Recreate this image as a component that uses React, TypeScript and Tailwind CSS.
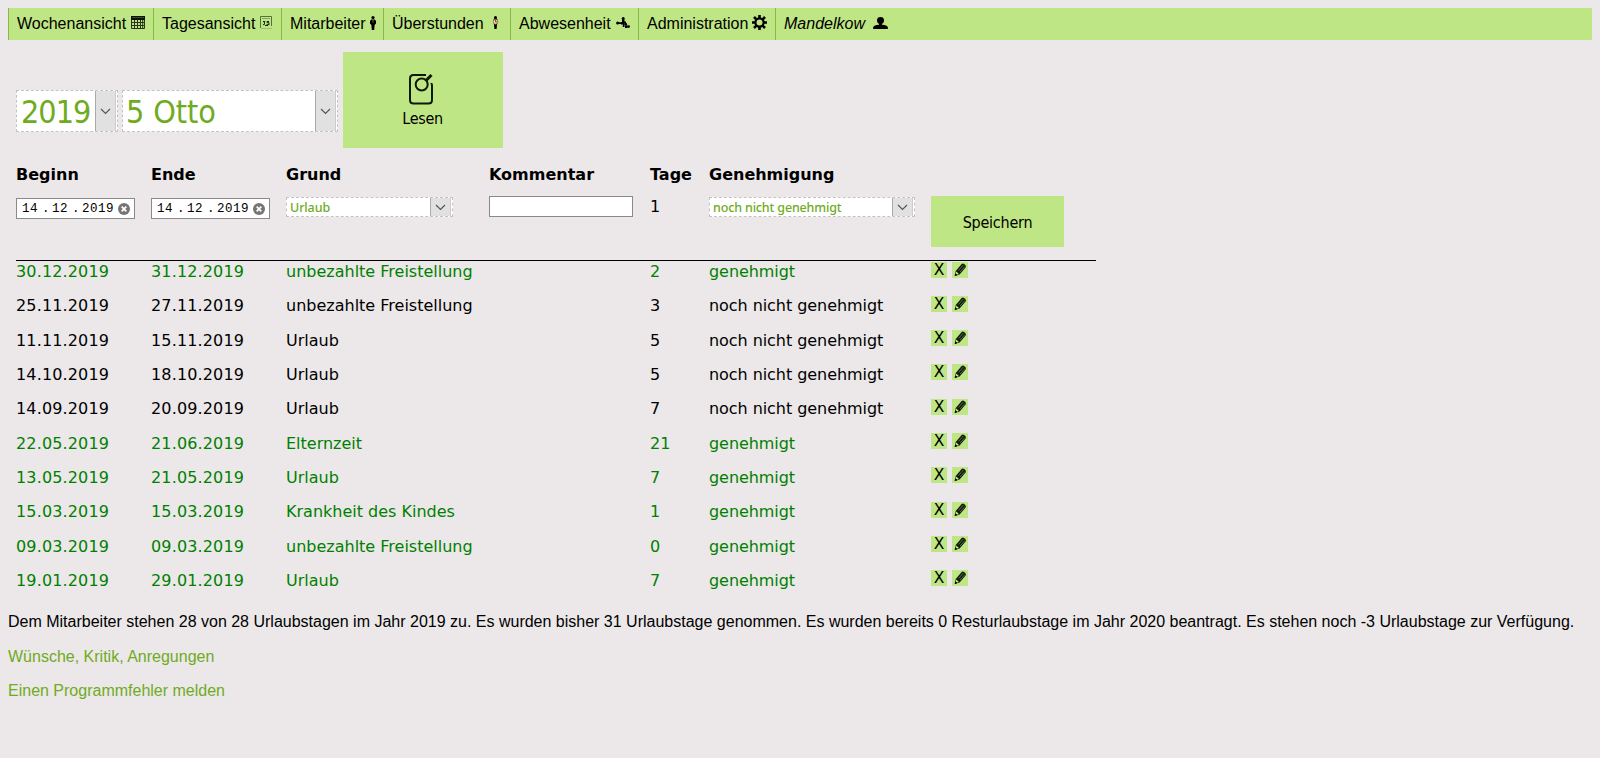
import React from "react";

const ChevronDown = () => (
  <svg width="11" height="7" viewBox="0 0 11 7" fill="none" stroke="#555" strokeWidth="1.2">
    <path d="M1 1l4.500 4.500L10 1" />
  </svg>
);

const CalendarIcon = () => (
  <svg width="14" height="13" viewBox="0 0 14 13">
    <path d="M0 0h14v4H0z" fill="#0c1206" />
    <path d="M1 1.500h12" stroke="#5d7440" strokeWidth=".6" />
    <path d="M.5 4v8.500h13V4M3.500 4v9M6.500 4v9M9.500 4v9M11.700 4v9M0 6.500h14M0 9.500h14" fill="none" stroke="#27361a" />
  </svg>
);

const DayIcon = () => (
  <svg width="13" height="13" viewBox="0 0 13 13" fill="none">
    <path d="M.5 12V.5h11V10" stroke="#55703a" />
    <path d="M2 2.500h8" stroke="#86a85c" />
    <path d="M1 12.500h11" stroke="#9cc46c" />
    <path d="M3 5.500h2l-1 1.500 1 1-2 .8M9 5.500H7v1.200h2v2H6.500M5 9.500h3" stroke="#1a260e" />
  </svg>
);

const ManIcon = () => (
  <svg width="6" height="14" viewBox="0 0 6 14">
    <circle cx="3" cy="1.600" r="1.600" />
    <path d="M1.200 3.500h3.600L6 5v2.500L4.600 9 4.200 14H1.800L1.400 9 0 7.500V5z" />
    <path d="M3 4v2.500" stroke="#8dad63" strokeWidth=".7" />
  </svg>
);

const OvertimeIcon = () => (
  <svg width="7" height="13" viewBox="0 0 7 13">
    <circle cx="3.500" cy="1.500" r="1.500" />
    <path d="M2 2.500h3l1 3-1 3-.4 4.500H2.400L2 8.500l-1-3z" />
    <circle cx="3.500" cy="5.800" r="2.400" fill="#e8dcb4" stroke="#75844f" strokeWidth=".6" />
    <path d="M3.500 4v2H5.400" fill="none" stroke="#e02a10" />
  </svg>
);

const AbsenceIcon = () => (
  <svg width="14" height="11" viewBox="0 0 14 11">
    <circle cx="7.200" cy="1.500" r="1.500" />
    <path d="M6 2.500h2.500V10H6.800V7.400H5V5h1z" />
    <circle cx="1.600" cy="6" r="1.500" />
    <path d="M1.500 5.300h5v1.600h-5zM8 4.600h2v1.800H8z" />
    <circle cx="9.800" cy="7.400" r="1.400" />
    <path d="M9 8.400h2.500V11H9z" />
    <circle cx="12.600" cy="9.600" r="1.400" />
  </svg>
);

const GearIcon = () => (
  <svg width="15" height="15" viewBox="0 0 15 15" fill="none" stroke="#000">
    <circle cx="7.500" cy="7.500" r="4.100" strokeWidth="2.200" />
    <path d="M7.500 0v3M7.500 12v3M0 7.500h3M12 7.500h3M2 2l2.400 2.400M10.600 10.600L13 13M13 2l-2.400 2.400M4.400 10.600L2 13" strokeWidth="2.600" />
  </svg>
);

const UserIcon = () => (
  <svg width="15" height="12" viewBox="0 0 15 12">
    <ellipse cx="7.500" cy="3.400" rx="3.500" ry="3.400" />
    <path d="M6 6h3v1.800c4 .3 6 1.400 6 3.200 0 .6-.5 1-1 1H1c-.5 0-1-.4-1-1 0-1.800 2-2.900 6-3.200z" />
  </svg>
);

const PencilIcon = () => (
  <svg width="16" height="16" viewBox="0 0 16 16" className="block">
    <path d="M3.700 9L9.500 2.200Q10.700 1 12.300 2.200l1 1Q14.500 4.400 13.600 5.600L7.600 12.600 3 14z" fill="#10180a" />
    <path d="M4.300 9.600l2.600 2.400-1.800.8-1.500-1.300z" fill="#bfe484" />
    <path d="M6.400 8.500l5-5.500M8 10l5-5.500" stroke="#7d9a56" strokeWidth=".7" />
    <path d="M2.600 14l.6-2.700 2.100 1.800z" fill="#000" />
  </svg>
);

const ReadIcon = () => (
  <svg width="24" height="32" viewBox="0 0 24 32" fill="none" stroke="#10180a" strokeWidth="2">
    <path d="M17 2H4.500Q1 2 1 5.500V27Q1 30.500 4.500 30.500h15Q23 30.500 23 27V12l-.8-2" />
    <circle cx="12.700" cy="11.500" r="6" />
    <path d="M17 7.500l5.500-5.500" strokeWidth="3" />
  </svg>
);

const ClearIcon = () => (
  <svg width="12" height="12" viewBox="0 0 12 12">
    <circle cx="6" cy="6" r="6" fill="#757575" />
    <path d="M3.700 3.700l4.600 4.600M8.300 3.700L3.700 8.300" stroke="#fff" strokeWidth="1.800" />
  </svg>
);

const nav = [
  { label: "Wochenansicht", width: "w-[145px]", icon: <CalendarIcon />, gap: "gap-[5px]" },
  { label: "Tagesansicht", width: "w-[128px]", icon: <DayIcon />, gap: "gap-[5px]" },
  { label: "Mitarbeiter", width: "w-[102px]", icon: <ManIcon />, gap: "gap-[4px]" },
  { label: "Überstunden", width: "w-[127px]", icon: <OvertimeIcon />, gap: "gap-[8px]" },
  { label: "Abwesenheit", width: "w-[128px]", icon: <AbsenceIcon />, gap: "gap-[5px]" },
  { label: "Administration", width: "w-[137px]", icon: <GearIcon />, gap: "gap-[4px]" },
  { label: "Mandelkow", width: "w-[140px]", icon: <UserIcon />, gap: "gap-[8px]", italic: true },
];

const rows = [
  ["30.12.2019", "31.12.2019", "unbezahlte Freistellung", "2", true],
  ["25.11.2019", "27.11.2019", "unbezahlte Freistellung", "3", false],
  ["11.11.2019", "15.11.2019", "Urlaub", "5", false],
  ["14.10.2019", "18.10.2019", "Urlaub", "5", false],
  ["14.09.2019", "20.09.2019", "Urlaub", "7", false],
  ["22.05.2019", "21.06.2019", "Elternzeit", "21", true],
  ["13.05.2019", "21.05.2019", "Urlaub", "7", true],
  ["15.03.2019", "15.03.2019", "Krankheit des Kindes", "1", true],
  ["09.03.2019", "09.03.2019", "unbezahlte Freistellung", "0", true],
  ["19.01.2019", "29.01.2019", "Urlaub", "7", true],
] as const;

const GRID = "grid grid-cols-[135px_135px_203px_161px_59px_222px_165px]";

function Select({ text, box, label }: { text: string; box: string; label: string }) {
  return (
    <div className={`flex border border-dashed border-[#c4c2c2] bg-white pr-px text-[#6fab1f] ${box}`}>
      <span className={`flex-1 whitespace-nowrap ${label}`}>{text}</span>
      <span className="flex w-[21px] items-center justify-center border-x border-l-[#aaa] border-r-[#ccc] bg-[#e1e1e1]">
        <ChevronDown />
      </span>
    </div>
  );
}

function DateField() {
  return (
    <div className="mt-[2px] flex h-[21px] w-[119px] items-center border border-[#8a8a8a] bg-white pl-[5px] font-['Liberation_Mono',monospace] text-[12.5px] leading-[16px] tracking-[0.5px]">
      <span className="w-[18px] pt-px">14</span>
      <span className="w-[12px] pl-[2px] pt-px">.</span>
      <span className="w-[18px] pt-px">12</span>
      <span className="w-[12px] pl-[2px] pt-px">.</span>
      <span className="w-[36px] pt-px">2019</span>
      <ClearIcon />
    </div>
  );
}

export default function App() {
  return (
    <div className="h-[758px] w-[1600px] overflow-hidden bg-[#ece8e9] px-2 pt-2 font-['Liberation_Sans',Arial,sans-serif] text-base text-black">
      <nav className="flex h-8 bg-[#bfe684]">
        {nav.map((n) => (
          <a key={n.label} className={`flex items-center border-l border-[#86bb40] pl-2 ${n.width} ${n.gap}`}>
            <span className={n.italic ? "italic" : ""}>{n.label}</span>
            <span className="-mt-[3px]">{n.icon}</span>
          </a>
        ))}
      </nav>

      <div className="mt-3 flex h-24 items-start pl-2">
        <Select text="2019" box="mt-[38px] h-[42px] w-[102px]" label="pl-1 font-['DejaVu_Sans_Condensed','DejaVu_Sans',sans-serif] text-[32px] leading-[43px] tracking-[-1px]" />
        <Select text="5 Otto" box="ml-1 mt-[38px] h-[42px] w-[216px]" label="pl-[3px] font-['DejaVu_Sans_Condensed','DejaVu_Sans',sans-serif] text-[32px] leading-[43px] tracking-[-0.1px]" />
        <button className="ml-[5px] flex h-24 w-40 flex-col items-center bg-[#bfe684] pt-[21px] font-['DejaVu_Sans_Condensed','DejaVu_Sans',sans-serif]">
          <span className="mr-[4px] h-8">
            <ReadIcon />
          </span>
          <span className="mt-[4px] mr-px text-base leading-5 tracking-[-0.3px]">Lesen</span>
        </button>
      </div>

      <div className="ml-2 w-[1080px] font-['DejaVu_Sans',Verdana,sans-serif]">
        <div className={`${GRID} mt-[15px] h-[33px] font-bold leading-6`}>
          <span>Beginn</span>
          <span>Ende</span>
          <span>Grund</span>
          <span>Kommentar</span>
          <span>Tage</span>
          <span>Genehmigung</span>
        </div>
        <div className={`${GRID} h-[65px] items-start border-b border-black`}>
          <DateField />
          <DateField />
          <Select text="Urlaub" box="mt-px h-5 w-[167px]" label="pl-[3px] font-['Noto_Sans',sans-serif] text-[12.5px] leading-[19px] font-medium tracking-[-0.1px]" />
          <div className="h-[21px] w-[144px] border border-[#8a8a8a] bg-white" />
          <span className="leading-[22px]">1</span>
          <Select text="noch nicht genehmigt" box="mt-px h-5 w-[206px]" label="pl-[3px] font-['Noto_Sans',sans-serif] text-[12.5px] leading-[19px] font-medium tracking-[-0.15px]" />
          <button className="h-[51px] w-[133px] bg-[#bfe684] pt-[2px] font-['DejaVu_Sans_Condensed','DejaVu_Sans',sans-serif] text-base tracking-[-0.25px]">Speichern</button>
        </div>
        {rows.map(([from, to, reason, days, ok]) => (
          <div key={from} className={`${GRID} h-[34.333px] items-start leading-[22px] ${ok ? "text-[#008000]" : "text-black"}`}>
            <span className="tracking-[0.15px]">{from}</span>
            <span className="tracking-[0.15px]">{to}</span>
            <span className="col-span-2 w-[300px]">{reason}</span>
            <span>{days}</span>
            <span className="tracking-[-0.06px]">{ok ? "genehmigt" : "noch nicht genehmigt"}</span>
            <span className="flex gap-[5px] pt-[0.5px] text-black">
              <button className="flex h-4 w-4 items-center justify-center bg-[#bfe684] font-['DejaVu_Sans',sans-serif] text-[15.5px] leading-4">X</button>
              <button className="h-4 w-4 bg-[#bfe684]">
                <PencilIcon />
              </button>
            </span>
          </div>
        ))}
      </div>

      <p className="mt-[9px] whitespace-nowrap leading-[18px]">
        Dem Mitarbeiter stehen 28 von 28 Urlaubstagen im Jahr 2019 zu. Es wurden bisher 31 Urlaubstage genommen. Es wurden bereits 0 Resturlaubstage im Jahr 2020 beantragt. Es stehen noch -3 Urlaubstage zur Verfügung.
      </p>
      <p className="mt-[17px] leading-[18px] text-[#6fab1f]">Wünsche, Kritik, Anregungen</p>
      <p className="mt-4 leading-[18px] text-[#6fab1f]">Einen Programmfehler melden</p>
    </div>
  );
}
